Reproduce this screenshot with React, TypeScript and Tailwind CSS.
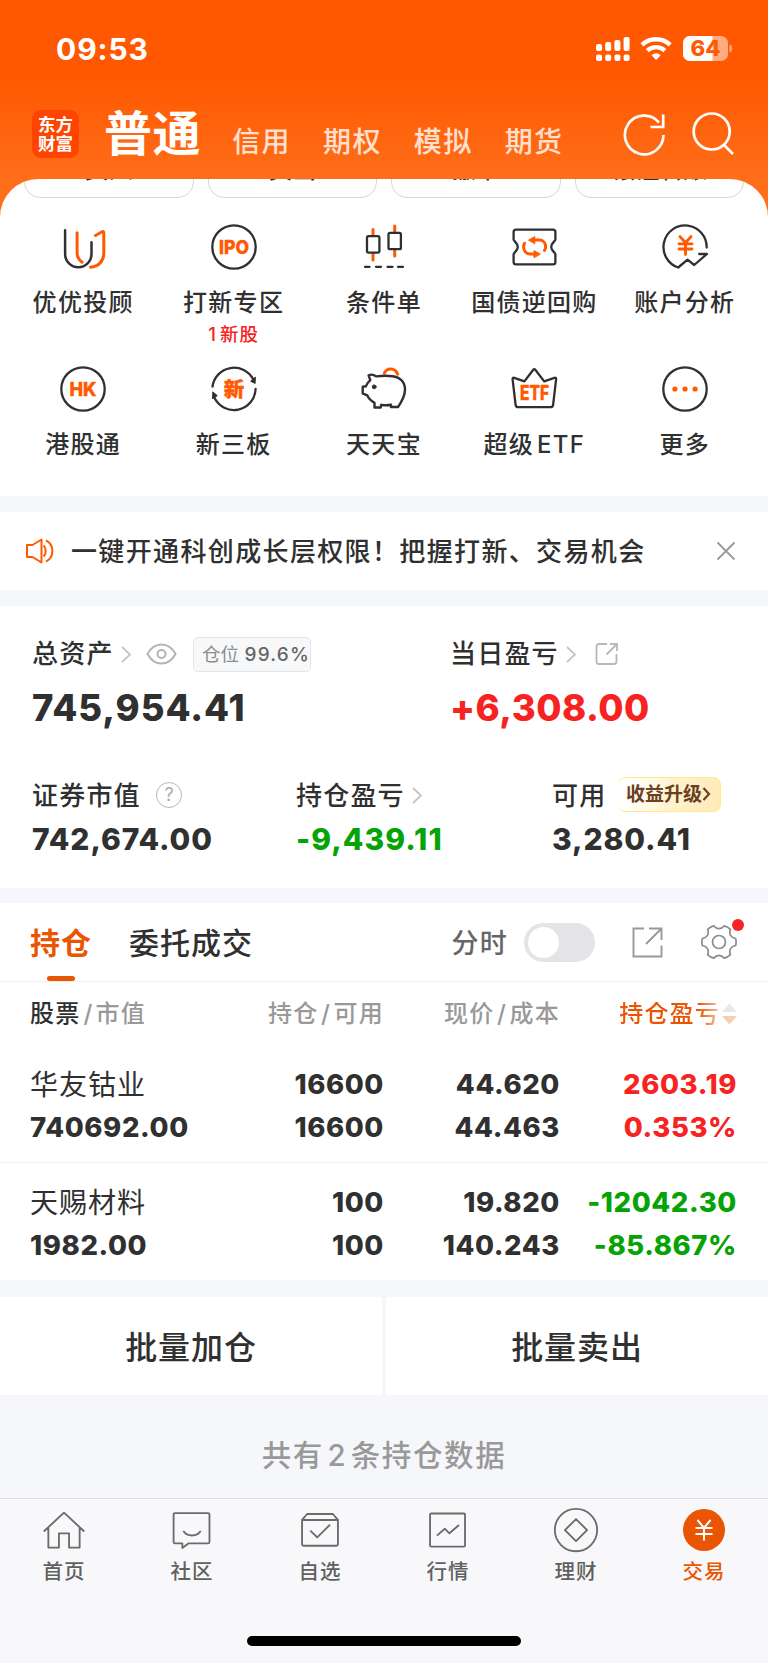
import React from 'react';

const D = '#303030';
const O = '#ff5a00';

function Glyph({ children }: { children: React.ReactNode }) {
  return (
    <svg width="48" height="48" viewBox="0 0 48 48" fill="none" stroke={D} strokeWidth="2.3" strokeLinecap="round" strokeLinejoin="round">
      {children}
    </svg>
  );
}

function IconText({ x, y, size, width, children }: { x: number; y: number; size: number; width: number; children: string }) {
  return (
    <text
      x={x}
      y={y}
      fontSize={size}
      textLength={width}
      lengthAdjust="spacingAndGlyphs"
      textAnchor="middle"
      fill={O}
      stroke={O}
      strokeWidth="0.4"
      className="font-extrabold"
    >
      {children}
    </text>
  );
}

const services = [
  {
    label: '优优投顾',
    icon: (
      <Glyph>
        <path d="M6.1 7.2V31a13.2 13.2 0 0 0 26.4 0V19.2" strokeWidth="2.5" />
        <path d="M18.1 9.8V30c0 4 2 7 5 9.2M36.5 12.5l6.5-3.8c1-.6 1.8-.2 1.8 1V30c0 8-5 13.6-13.3 14.2" stroke={O} strokeWidth="3" />
      </Glyph>
    ),
  },
  {
    label: '打新专区',
    note: '新股',
    icon: (
      <Glyph>
        <circle cx="24" cy="24" r="21.7" />
        <IconText x={24} y={31} size={19} width={30}>IPO</IconText>
      </Glyph>
    ),
  },
  {
    label: '条件单',
    icon: (
      <Glyph>
        <path d="M13 6.5v6M13 31v6M34.7 3v6M34.7 27v6" stroke={O} strokeWidth="3" />
        <rect x="7" y="13.2" width="12.4" height="16.4" rx="1.5" />
        <rect x="28.5" y="9.8" width="12.4" height="16.4" rx="1.5" />
        <path d="M5 43.8h4.6M16 43.8h5M27.5 43.8h5M38 43.8h5" />
      </Glyph>
    ),
  },
  {
    label: '国债逆回购',
    icon: (
      <Glyph>
        <path d="M6 6.6h37a2.4 2.4 0 0 1 2.4 2.4v7.5c0 1.6-4.2 3.6-4.2 7.4s4.2 5.8 4.2 7.4V39a2.4 2.4 0 0 1-2.4 2.4H6A2.4 2.4 0 0 1 3.6 39v-7.7c0-1.6 4.2-3.6 4.2-7.4S3.6 18.1 3.6 16.5V9A2.4 2.4 0 0 1 6 6.6Z" />
        <path d="M24.5 17H29c4.2 0 6.6 3 6.6 6.5 0 1.5-.4 2.8-1.1 3.9M24.5 31H21c-5 0-7.4-3.4-7.4-7 0-1.6.3-2.6.9-3.7" stroke={O} strokeWidth="3" />
        <path d="M18.8 17l6-3.4v6.8zM30 31l-6-3.4v6.8z" fill={O} stroke={O} strokeWidth="1" />
      </Glyph>
    ),
  },
  {
    label: '账户分析',
    icon: (
      <Glyph>
        <path d="M45.7 24.5A21.6 21.6 0 1 0 17.2 44.5L26.5 36.7l6.7 5.3L46 31h-7.8" />
        <path d="M19 13.6l5.5 6.2 5.5-6.2M24.5 20v11.5M18 20.9h13M18 26h13" stroke={O} strokeWidth="2.9" />
      </Glyph>
    ),
  },
  {
    label: '港股通',
    icon: (
      <Glyph>
        <circle cx="24" cy="24" r="21.7" />
        <IconText x={24} y={31} size={19} width={27}>HK</IconText>
      </Glyph>
    ),
  },
  {
    label: '新三板',
    icon: (
      <Glyph>
        <path d="M2.5 21.5A21.7 21.7 0 0 1 43.3 14.5M45.6 24a21.7 21.7 0 0 1-41.3 8.6" />
        <path d="M45 18.3l-4-2 4.3-3.8zM2.9 27.2l4 3.6-4.3 2.6z" fill={D} strokeWidth="1.2" />
        <IconText x={24} y={31.5} size={20.5} width={20.5}>新</IconText>
      </Glyph>
    ),
  },
  {
    label: '天天宝',
    icon: (
      <Glyph>
        <path d="M24.3 8.2c2.5-5.6 10.8-6 13.4 1" stroke={O} strokeWidth="3" />
        <path d="M8.6 10.3c2-1 5-.8 7.6 1.1 5-.6 11-.8 16.3-.2C40.5 12 45 17.5 45 24.5c0 6-2.8 11.5-7 17.5h-7v-2.2c-3 .6-7 .6-9.8 0L20.7 42.5h-6.2v-4.8c-3-1.5-5.8-4-7.3-7.4l-4.5-1.9v-6.6l3.3-.6c.8-2.2 2.2-4.2 4.3-6z" strokeWidth="2.4" />
        <circle cx="14.2" cy="21.8" r="1.9" fill={D} strokeWidth="1" />
      </Glyph>
    ),
  },
  {
    label: '超级ETF',
    icon: (
      <Glyph>
        <path d="M4.2 12.9l10.2 3.5 8.9-11.7c.6-.8 1.4-.8 2 0l8.9 11.7 10.2-3.5c1.2-.4 1.9.2 1.7 1.4l-3 25.5c-.2 1.6-1.1 2.4-2.6 2.4H8.2c-1.5 0-2.4-.8-2.6-2.4l-3-25.5c-.2-1.2.4-1.8 1.6-1.4z" />
        <IconText x={24.5} y={35.2} size={19.5} width={29}>ETF</IconText>
      </Glyph>
    ),
  },
  {
    label: '更多',
    icon: (
      <Glyph>
        <circle cx="24" cy="24" r="21.7" />
        <g fill={O} stroke="none">
          <circle cx="13.9" cy="24" r="2.6" />
          <circle cx="24" cy="24" r="2.6" />
          <circle cx="34.1" cy="24" r="2.6" />
        </g>
      </Glyph>
    ),
  },
];

function Chevron() {
  return (
    <svg width="10" height="17" viewBox="0 0 10 17" fill="none" stroke="#c4c4c4" strokeWidth="1.8">
      <path d="M1 1l8 7.5L1 16" />
    </svg>
  );
}

function gearPath() {
  const pt = (deg: number, r: number) => {
    const a = (deg * Math.PI) / 180;
    return `${(18 + r * Math.cos(a)).toFixed(2)} ${(18 + r * Math.sin(a)).toFixed(2)}`;
  };
  let d = `M${pt(-12, 17)}`;
  for (let k = 0; k < 6; k++) {
    const a = k * 60;
    d += `Q${pt(a, 17.6)} ${pt(a + 12, 17)}Q${pt(a + 30, 10.4)} ${pt(a + 48, 17)}`;
  }
  return d + 'Z';
}

const holdings = [
  { name: '华友钴业', value: '740692.00', qty: '16600', avail: '16600', price: '44.620', cost: '44.463', pl: '2603.19', pct: '0.353%', color: 'text-[#f72323]' },
  { name: '天赐材料', value: '1982.00', qty: '100', avail: '100', price: '19.820', cost: '140.243', pl: '-12042.30', pct: '-85.867%', color: 'text-[#05a305]' },
];

const tabs = [
  { label: '首页', icon: <path d="M2 24L24 3.5 46 24M7 20v21.5h11.5V26H29.5v15.5H41V20" /> },
  { label: '社区', icon: <><path d="M5.5 4h36a1.5 1.5 0 0 1 1.5 1.5v30a1.5 1.5 0 0 1-1.5 1.5H20l-6.5 5v-5h-8A1.5 1.5 0 0 1 4 35.5v-30A1.5 1.5 0 0 1 5.5 4z" /><path d="M14.5 23.5c4.5 6.5 14.5 6.5 19 0" /></> },
  { label: '自选', icon: <><path d="M4.5 11.5L10 5h28l5.5 6.5V38a1.5 1.5 0 0 1-1.5 1.5H6A1.5 1.5 0 0 1 4.5 38zM4.5 11.5h39" /><path d="M13.5 23l7.5 7.5 14-14" /></> },
  { label: '行情', icon: <><rect x="4.5" y="4.5" width="38" height="36" rx="1.2" /><path d="M12 28.5l8.5-7.5 5 5L36 17" /></> },
  { label: '理财', icon: <><circle cx="24" cy="22.5" r="23" /><path d="M24 10.5l12 12-12 12-12-12z" /></> },
];

export default function App() {
  return (
    <div className="flex h-[1663px] w-[768px] flex-col overflow-hidden bg-[#f6f7fa] font-['Inter','Noto_Sans_CJK_SC',sans-serif] leading-none whitespace-nowrap text-[#303030]">
      <header className="h-[179px] shrink-0 bg-[linear-gradient(#ff5800_42%,#ff6e1a)] text-white">
        <div className="flex h-[98px] items-center pl-[56px] pr-[36px]">
          <span className="flex-1 text-[30px] font-bold tracking-[0.9px]">09:53</span>
          <svg width="136" height="26" viewBox="0 0 136 26" fill="#fff">
            <rect x="0" y="8" width="6" height="7" rx="2" />
            <rect x="9.2" y="6" width="6" height="9" rx="2" />
            <rect x="18.4" y="4" width="6" height="11" rx="2" />
            <rect x="27.6" y="1" width="6" height="14" rx="2" />
            <rect x="0" y="18.5" width="6" height="6.5" rx="2" />
            <rect x="9.2" y="18.5" width="6" height="6.5" rx="2" />
            <rect x="18.4" y="18.5" width="6" height="6.5" rx="2" />
            <rect x="27.6" y="18.5" width="6" height="6.5" rx="2" />
            <path d="M46 8.8a20.5 20.5 0 0 1 28.2 0" fill="none" stroke="#fff" strokeWidth="4.4" />
            <path d="M51.3 14.6a13 13 0 0 1 17.6 0" fill="none" stroke="#fff" strokeWidth="4.4" />
            <path d="M55.500 19.200a6.500 6.500 0 0 1 9.200 0L60.100 24z" />
            <rect x="87" y="0" width="45" height="25" rx="7" opacity="0.5" />
            <path d="M94 0h22.5v25H94a7 7 0 0 1-7-7V7a7 7 0 0 1 7-7z" />
            <path d="M133.5 8.5c3.5 1 3.5 7 0 8z" opacity="0.5" />
            <text x="109.5" y="20.2" fontSize="21" textAnchor="middle" textLength="30" lengthAdjust="spacingAndGlyphs" fill="#ff5a00" className="font-extrabold">64</text>
          </svg>
        </div>
        <div className="flex h-[72px] items-center pl-[32px] pr-[33px]">
          <div className="flex h-[48px] w-[47px] flex-col items-center justify-center gap-px rounded-[9px] bg-[#ff4400] text-[17.5px] font-bold">
            <span>东方</span>
            <span>财富</span>
          </div>
          <span className="ml-[25px] text-[48px] font-bold tracking-[0.6px]">普通</span>
          <div className="ml-[31px] flex flex-1 gap-[32px] pt-[16px] text-[28px] font-medium tracking-[1.4px] text-white/80">
            <span>信用</span>
            <span>期权</span>
            <span>模拟</span>
            <span>期货</span>
          </div>
          <svg width="112" height="44" viewBox="0 0 112 44" fill="none" stroke="#fff" strokeWidth="2.7">
            <path d="M40.5 23a19.3 19.3 0 1 1-4.5-12.4M40.2 2.5V15H27.5" />
            <circle cx="88.7" cy="19.5" r="18" />
            <path d="M101 33l9 9" />
          </svg>
        </div>
      </header>

      <div className="h-[317px] shrink-0 bg-[#ff6e1a]">
        <section className="h-full overflow-hidden rounded-t-[38px] bg-white">
          <div className="-mt-[37px] flex h-[57px] gap-[14px] px-[24px]">
            {['买入', '卖出', '撤单', '银证转账'].map((t) => (
              <div key={t} className="flex h-[56px] flex-1 items-center justify-center rounded-[16px] border-[1.5px] border-[#d6d6d6] text-[24px] font-medium">
                {t}
              </div>
            ))}
          </div>
          <div className="grid grid-cols-5 px-[8px] pt-[24px]">
            {services.map((s) => (
              <div key={s.label} className="flex h-[142px] flex-col items-center">
                {s.icon}
                <span className="mt-[20px] text-[24px] font-medium tracking-[1.3px]">
                  {s.label.replace('ETF', '')}
                  {s.label.endsWith('ETF') && <span className="ml-[3px]">ETF</span>}
                </span>
                {s.note && (
                  <span className="mt-[10px] text-[18.5px] font-medium tracking-[1px] text-[#f72323]">
                    1<span className="ml-[3px]">{s.note}</span>
                  </span>
                )}
              </div>
            ))}
          </div>
        </section>
      </div>

      <section className="mt-[16px] flex h-[78px] shrink-0 items-center bg-white pl-[26px] pr-[32px]">
        <svg width="28" height="26" viewBox="0 0 28 26" fill="none" stroke="#ff5a00" strokeWidth="2" strokeLinejoin="round">
          <path d="M1 7h5.5L15.5 1.5v23L6.5 19H1z" />
          <path d="M17.5 7.5c3 2.5 3 8.5 0 11M20 2.5c8.5 4 8.5 17 0 21" />
        </svg>
        <span className="ml-[17px] flex-1 pt-[2px] text-[26px] font-medium tracking-[1.36px]">一键开通科创成长层权限！把握打新、交易机会</span>
        <svg width="20" height="20" viewBox="0 0 20 20" stroke="#999" strokeWidth="1.8">
          <path d="M1.5 1.5l17 17M18.5 1.5l-17 17" />
        </svg>
      </section>

      <section className="mt-[16px] h-[282px] shrink-0 bg-white pl-[32px] pt-[30px]">
        <div className="flex">
          <div className="w-[418px]">
            <div className="flex h-[36px] items-center">
              <span className="w-[89px] text-[26px] font-medium tracking-[1.2px]">总资产</span>
              <Chevron />
              <svg className="ml-[15px]" width="31" height="22" viewBox="0 0 31 22" fill="none" stroke="#b4b4b4" strokeWidth="2">
                <path d="M1.5 11C5 4.5 10 1.5 15.5 1.5S26 4.5 29.5 11C26 17.5 21 20.5 15.5 20.5S5 17.5 1.5 11z" />
                <circle cx="15.5" cy="11" r="4" />
              </svg>
              <div className="ml-[16px] flex h-[35px] w-[118px] items-center rounded-[5px] border border-[#e1e4e9] bg-[#f7f8fa] pl-[8px] text-[18.5px] text-[#8c8c8c]">
                <span className="w-[43px]">仓位</span>
                <span className="text-[19px] font-medium tracking-[1.2px] text-[#666]">99.6%</span>
              </div>
            </div>
            <div className="mt-[16px] flex h-[40px] items-center text-[36.5px] font-extrabold tracking-[0.95px]">745,954.41</div>
          </div>
          <div>
            <div className="flex h-[36px] items-center">
              <span className="w-[116px] text-[26px] font-medium tracking-[1.2px]">当日盈亏</span>
              <Chevron />
              <svg className="ml-[19px]" width="24" height="24" viewBox="0 0 24 24" fill="none" stroke="#b8b8b8" strokeWidth="1.8">
                <path d="M12 2H4a2.5 2.5 0 0 0-2.5 2.5v15A2.5 2.5 0 0 0 4 22h15a2.5 2.5 0 0 0 2.5-2.5V12M15 2h7v7M22 2L11.5 12.5" />
              </svg>
            </div>
            <div className="mt-[16px] flex h-[40px] items-center text-[36.5px] font-extrabold tracking-[0.5px] text-[#f72323]">+6,308.00</div>
          </div>
        </div>
        <div className="mt-[49px] flex">
          <div className="w-[264px]">
            <div className="flex h-[36px] items-center">
              <span className="w-[124px] pt-[2px] text-[26px] font-medium tracking-[1.2px]">证券市值</span>
              <div className="flex h-[26px] w-[26px] items-center justify-center rounded-full border-[1.5px] border-[#b8b8b8] text-[18px] text-[#adadad]">?</div>
            </div>
            <div className="mt-[11px] flex h-[30px] items-center text-[30px] font-extrabold tracking-[0.9px]">742,674.00</div>
          </div>
          <div className="w-[256px]">
            <div className="flex h-[36px] items-center">
              <span className="w-[116px] pt-[2px] text-[26px] font-medium tracking-[1.2px]">持仓盈亏</span>
              <Chevron />
            </div>
            <div className="mt-[11px] flex h-[30px] items-center text-[30px] font-extrabold tracking-[1.050px] text-[#05a305]">-9,439.11</div>
          </div>
          <div>
            <div className="flex h-[36px] items-center">
              <span className="w-[66px] pt-[2px] text-[26px] font-medium tracking-[1.2px]">可用</span>
              <div className="mb-[2px] flex h-[35px] w-[103px] items-center rounded-[8px] border border-l-0 border-[#ffea85] bg-[linear-gradient(100deg,#ffffff_12%,#fff3cf_50%,#ffe9b8)] pl-[8px] text-[19px] font-bold text-[#6b3f22]">
                收益升级
                <svg width="9" height="14" viewBox="0 0 9 14" fill="none" stroke="#6b3f22" strokeWidth="2.2">
                  <path d="M1.5 1l5.5 6-5.5 6" />
                </svg>
              </div>
            </div>
            <div className="mt-[11px] flex h-[30px] items-center text-[30px] font-extrabold tracking-[0.9px]">3,280.41</div>
          </div>
        </div>
      </section>

      <section className="mt-[15px] h-[377px] shrink-0 bg-white">
        <div className="flex h-[79px] items-center border-b border-[#f1f2f4] pl-[30px] pr-[31px]">
          <div className="relative flex h-full items-center pt-[2px] text-[30px] font-bold tracking-[1px] text-[#ea5504]">
            持仓
            <div className="absolute bottom-0 left-[17px] h-[5px] w-[28px] rounded-[2.5px] bg-[#ea5504]" />
          </div>
          <span className="ml-[37px] flex-1 pt-[2px] text-[30px] font-medium tracking-[1px]">委托成交</span>
          <span className="pt-[2px] text-[27px] font-medium tracking-[1.2px] text-[#666]">分时</span>
          <div className="ml-[16px] flex h-[39px] w-[71px] items-center rounded-full bg-[#e4e4e6] pl-[4px]">
            <div className="h-[31px] w-[31px] rounded-full bg-white" />
          </div>
          <svg className="ml-[37px]" width="31" height="31" viewBox="0 0 31 31" fill="none" stroke="#999" strokeWidth="1.9">
            <path d="M12 1.5H1.5v28h28V18.5M17 1.5h12.5V13M29.5 1.5L14 17" />
          </svg>
          <div className="relative ml-[38px] h-[36px] w-[36px]">
            <svg width="36" height="36" viewBox="0 0 36 36" fill="none" stroke="#8c8c8c" strokeWidth="1.7" strokeLinejoin="round">
              <path d={gearPath()} />
              <circle cx="18" cy="18" r="6.5" />
            </svg>
            <div className="absolute -right-[7px] -top-[5px] h-[12px] w-[12px] rounded-full bg-[#f72323]" />
          </div>
        </div>
        <div className="flex h-[64px] items-center pl-[30px] pr-[31px] text-[24px] font-medium tracking-[1.2px] text-[#999]">
          <div className="flex w-[140px]">
            <span className="text-[#303030]">股票</span>
            <span className="ml-[3px]">/</span>
            <span className="ml-[2px]">市值</span>
          </div>
          <span className="w-[214px] text-right">持仓<span className="mx-[2.5px]">/</span>可用</span>
          <span className="w-[176px] text-right">现价<span className="mx-[2.5px]">/</span>成本</span>
          <div className="flex flex-1 items-center justify-end gap-[2px]">
            <span className="bg-[linear-gradient(90deg,#ea5504_78%,#f7c4a4)] bg-clip-text text-transparent">持仓盈亏</span>
            <svg width="15" height="22" viewBox="0 0 15 22">
              <path d="M7.5 0.5L15 9H0z" fill="#e8e8e8" />
              <path d="M7.5 21.5L15 13H0z" fill="#f8cdb2" />
            </svg>
          </div>
        </div>
        {holdings.map((h, i) => (
          <div key={h.name} className={i === 0 ? 'flex h-[117px] border-b border-[#f1f2f4] pl-[30px] pr-[31px] pt-[17px] text-[27.5px] font-extrabold tracking-[0.6px]' : 'flex h-[117px] pl-[30px] pr-[31px] pt-[18px] text-[27.5px] font-extrabold tracking-[0.6px]'}>
            <div className="w-[170px]">
              <div className="flex h-[43px] items-center pt-px text-[28px] font-normal tracking-[1px]">{h.name}</div>
              <div className="flex h-[43px] items-center">{h.value}</div>
            </div>
            <div className="w-[184px]">
              <div className="flex h-[43px] items-center justify-end">{h.qty}</div>
              <div className="flex h-[43px] items-center justify-end">{h.avail}</div>
            </div>
            <div className="w-[176px]">
              <div className="flex h-[43px] items-center justify-end">{h.price}</div>
              <div className="flex h-[43px] items-center justify-end">{h.cost}</div>
            </div>
            <div className={`flex-1 ${h.color}`}>
              <div className="flex h-[43px] items-center justify-end">{h.pl}</div>
              <div className="flex h-[43px] items-center justify-end">{h.pct}</div>
            </div>
          </div>
        ))}
      </section>

      <div className="mt-[17px] flex h-[98px] shrink-0 gap-[4px] text-[32px] font-medium tracking-[0.9px]">
        <button className="flex flex-1 items-center justify-center bg-white pt-[3px]">批量加仓</button>
        <button className="flex flex-1 items-center justify-center bg-white pt-[3px]">批量卖出</button>
      </div>
      <div className="flex h-[103px] shrink-0 items-center justify-center pt-[18px] text-[29.5px] font-medium tracking-[1.6px] text-[#999]">
        共有<span className="mx-[3.5px]">2</span>条持仓数据
      </div>

      <nav className="flex h-[165px] shrink-0 flex-col items-center border-t border-[#dcdee2] bg-[#f8f8fb]">
        <div className="flex h-[137px] w-full text-[20.5px] font-medium tracking-[0.9px] text-[#606060]">
          {tabs.map((t) => (
            <div key={t.label} className="flex w-[128px] flex-col items-center pt-[9px]">
              <svg width="46" height="46" viewBox="-1 -1.5 50 50" fill="none" stroke="#6b6b6b" strokeWidth="2" strokeLinejoin="round">
                {t.icon}
              </svg>
              <span className="mt-[8px]">{t.label}</span>
            </div>
          ))}
          <div className="flex w-[128px] flex-col items-center pt-[9px] text-[#ea5504]">
            <svg width="46" height="46" viewBox="0 0 46 46" fill="none" stroke="#fff" strokeWidth="2">
              <circle cx="23" cy="22" r="21" fill="#ea5504" stroke="none" />
              <path d="M16.5 12l6.5 8 6.5-8M23 20v12.5M14.5 20h17M14.5 26h17" />
            </svg>
            <span className="mt-[8px]">交易</span>
          </div>
        </div>
        <div className="h-[10px] w-[274px] rounded-full bg-black" />
      </nav>
    </div>
  );
}
